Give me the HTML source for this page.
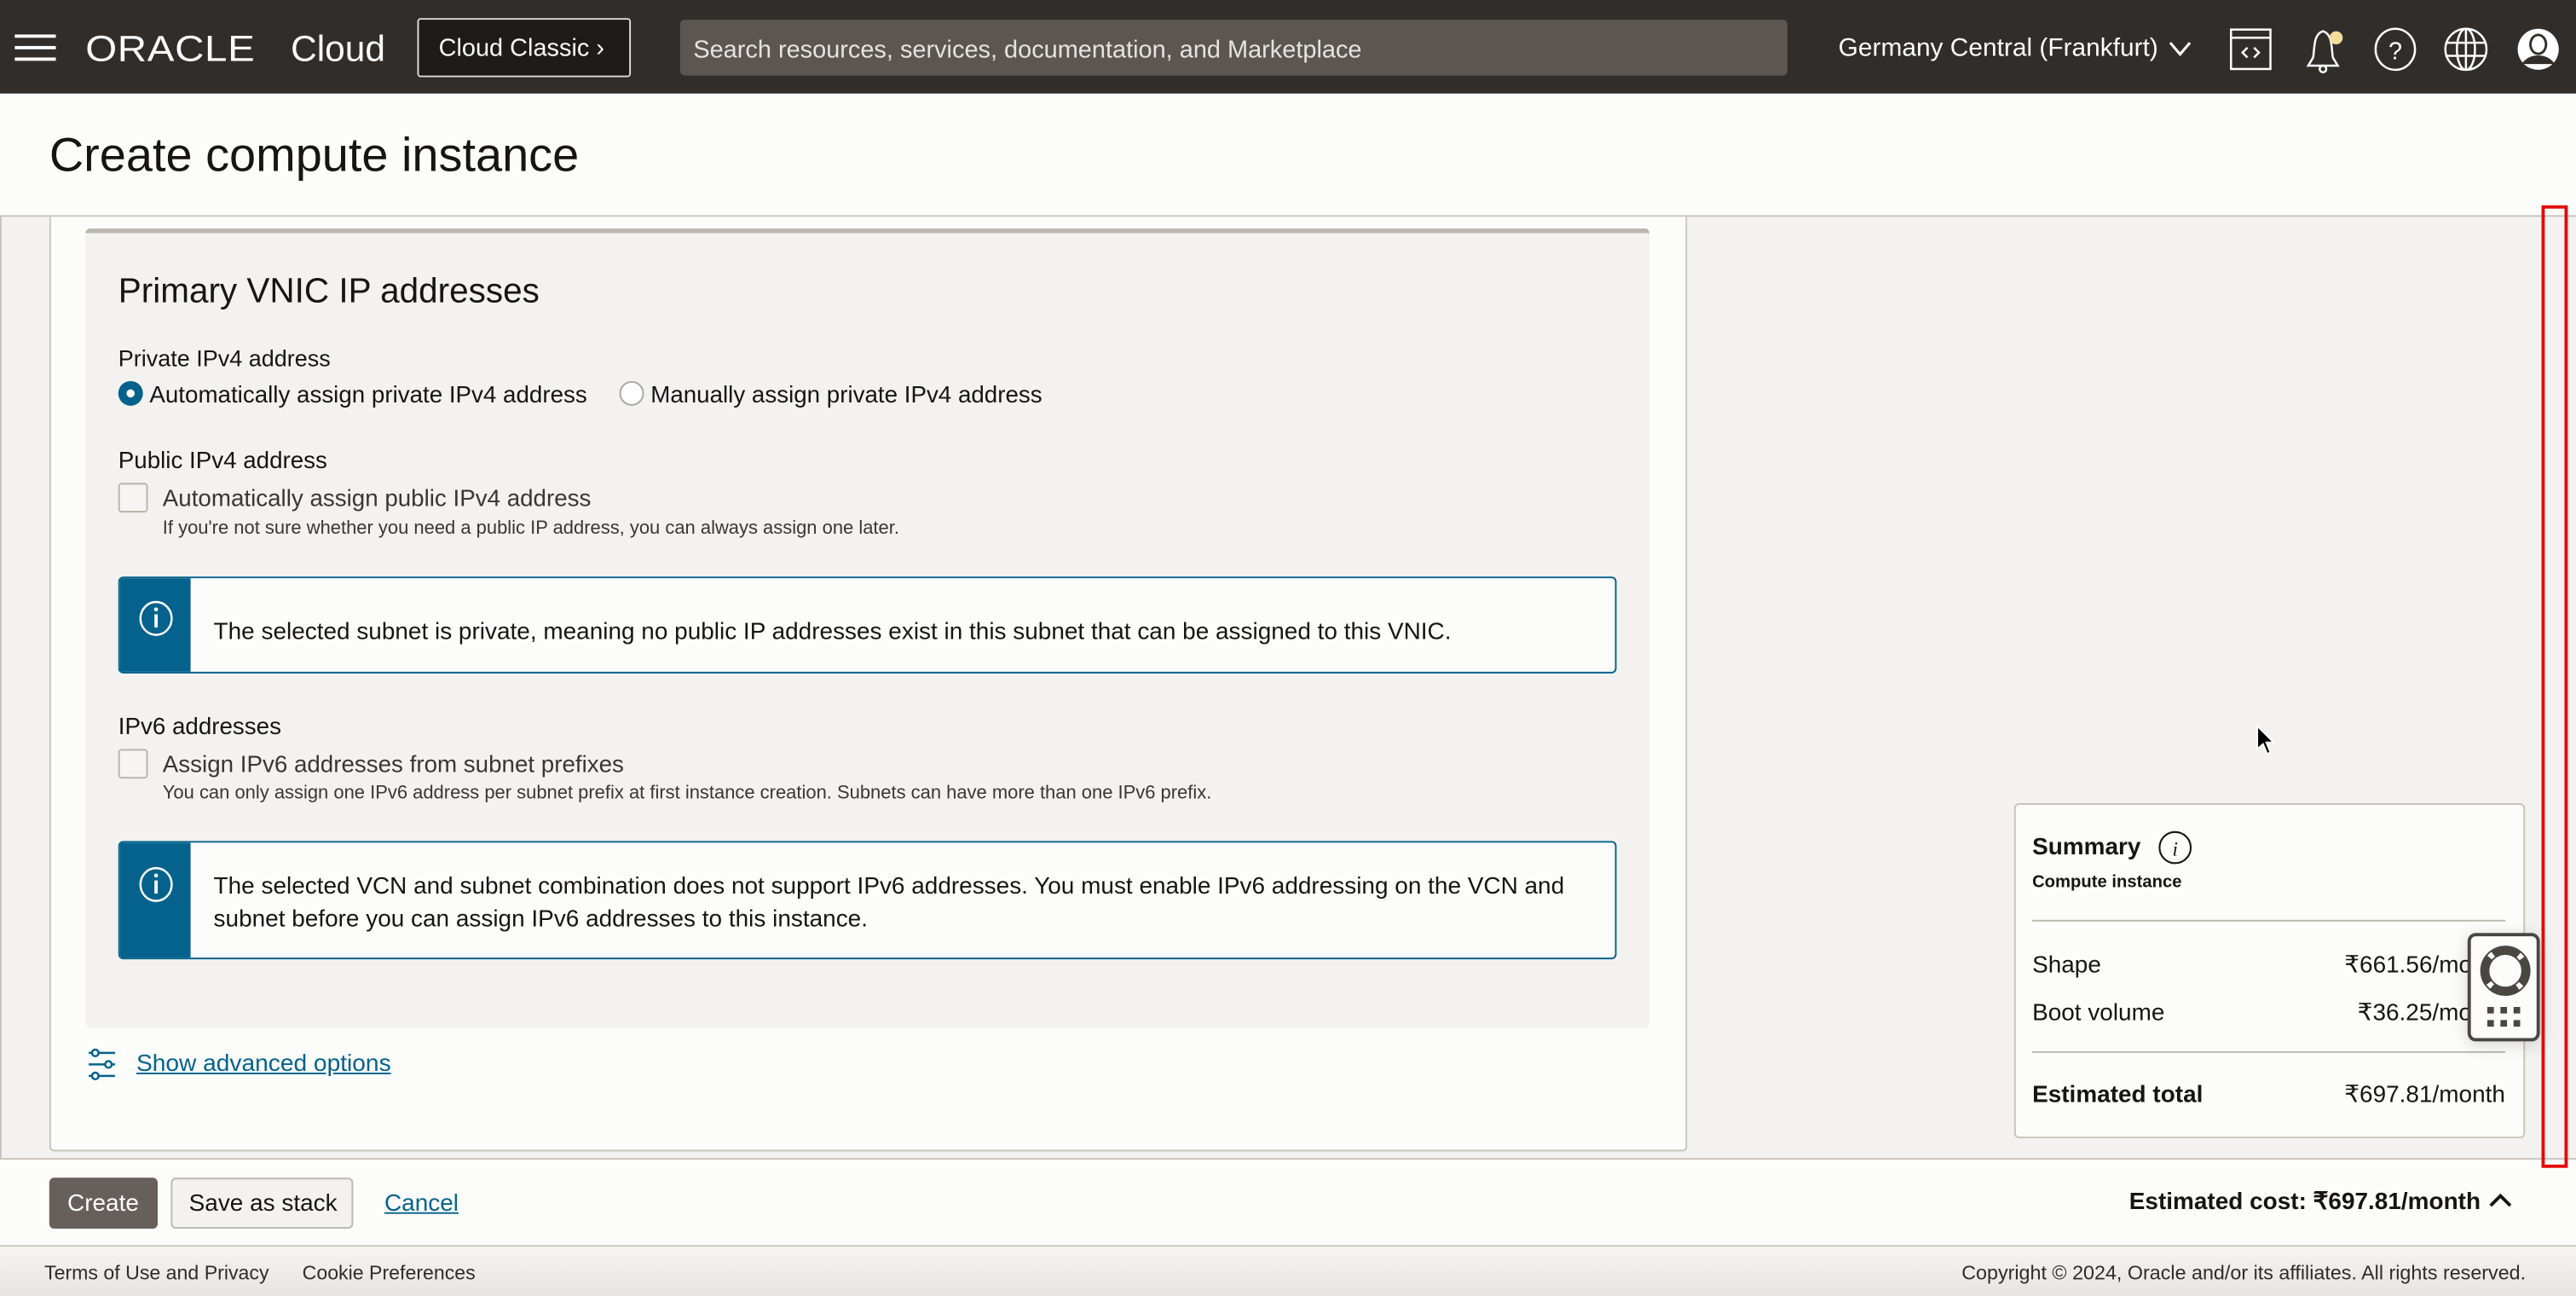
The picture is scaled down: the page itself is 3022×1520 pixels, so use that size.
<!DOCTYPE html>
<html><head><meta charset="utf-8">
<style>
html,body{margin:0;padding:0;width:3022px;height:1520px;overflow:hidden;background:#f3f2f0;}
#s{position:absolute;left:0;top:0;width:1568px;height:789px;transform-origin:0 0;transform:scale(1.92730,1.92649);font-family:"Liberation Sans",sans-serif;color:#161513;background:#f3f2f0;}
.a{position:absolute;}
.hdr{left:0;top:0;width:1568px;height:57px;background:#312d2a;}
.w{color:#fff;}
.t{white-space:nowrap;}
</style></head><body>
<div id="s">
<div class="a hdr"></div>
<div class="a" style="left:9px;top:21px;width:25px;height:2px;background:#fff"></div>
<div class="a" style="left:9px;top:28px;width:25px;height:2px;background:#fff"></div>
<div class="a" style="left:9px;top:35px;width:25px;height:2px;background:#fff"></div>
<div class="a t w" style="left:52px;top:17px;font-size:22px;font-weight:normal;letter-spacing:0.3px;transform:scaleX(1.12);transform-origin:0 0">ORACLE</div>
<div class="a t w" style="left:177px;top:17px;font-size:22px;">Cloud</div>
<div class="a" style="left:254px;top:11px;width:128px;height:34px;border:1px solid #ddd;border-radius:2px;background:#1e1b19"></div>
<div class="a t w" style="left:267px;top:21px;font-size:15px;">Cloud Classic &#x203A;</div>
<div class="a" style="left:414px;top:12px;width:674px;height:34px;background:#5b5652;border-radius:3px"></div>
<div class="a t" style="left:422px;top:22px;font-size:15px;color:#e6e3e0">Search resources, services, documentation, and Marketplace</div>
<div class="a t w" style="left:1119px;top:21px;font-size:15.5px;">Germany Central (Frankfurt)</div>
<svg class="a" style="left:1319px;top:23px" width="16" height="12"><path d="M2 3 L8 10 L14 3" stroke="#fff" stroke-width="1.6" fill="none"/></svg>
<svg class="a" style="left:1356px;top:16px" width="28" height="28" fill="none" stroke="#fff" stroke-width="1.3"><rect x="2" y="2" width="24" height="24"/><line x1="2" y1="7" x2="26" y2="7"/><path d="M12 13 L9 16 L12 19 M16 13 L19 16 L16 19"/></svg>
<svg class="a" style="left:1400px;top:15px" width="30" height="30" fill="none" stroke="#fff" stroke-width="1.3"><path d="M14 4 C8 6 9 14 8 20 L5 25 L23 25 L20 20 C19 14 20 6 14 4 Z"/><circle cx="14" cy="27" r="2"/><circle cx="22" cy="8" r="4" fill="#f5dc9a" stroke="none"/></svg>
<svg class="a" style="left:1444px;top:16px" width="28" height="28" fill="none" stroke="#fff" stroke-width="1.3"><ellipse cx="14" cy="14" rx="12" ry="12.5"/><text x="14" y="20" font-size="15" fill="#fff" stroke="none" text-anchor="middle" font-family="Liberation Sans">?</text></svg>
<svg class="a" style="left:1487px;top:16px" width="28" height="28" fill="none" stroke="#fff" stroke-width="1.3"><circle cx="14" cy="14" r="12.5"/><ellipse cx="14" cy="14" rx="5.5" ry="12.5"/><line x1="1.5" y1="10" x2="26.5" y2="10"/><line x1="1.5" y1="18" x2="26.5" y2="18"/><line x1="14" y1="1.5" x2="14" y2="26.5"/></svg>
<svg class="a" style="left:1531px;top:16px" width="28" height="28"><circle cx="14" cy="14" r="12.5" fill="#fff"/><ellipse cx="14" cy="11" rx="5.5" ry="6.5" fill="#312d2a"/><path d="M4 23 C8 16 20 16 24 23" fill="#312d2a"/><ellipse cx="14" cy="11" rx="4" ry="5" fill="#fff"/></svg>

<div class="a" style="left:0;top:57px;width:1568px;height:74px;background:#fcfcfb;border-bottom:1px solid #c8c3bd"></div>
<div class="a t" style="left:30px;top:79px;font-size:29px;">Create compute instance</div>

<div class="a" style="left:0;top:132px;width:1px;height:573px;background:#c8c3bd"></div>
<div class="a" style="left:30px;top:132px;width:995px;height:568px;background:#fcfcfb;border:1px solid #c8c3bd;border-top:none;border-radius:0 0 3px 3px"></div>
<div class="a" style="left:52px;top:139px;width:952px;height:487px;background:#f3f2f1;border-top:3px solid #bcb7b2;border-radius:3px 3px 4px 4px;box-sizing:border-box"></div>
<div class="a t" style="left:72px;top:166px;font-size:21px;">Primary VNIC IP addresses</div>
<div class="a t" style="left:72px;top:210px;font-size:14px;">Private IPv4 address</div>
<div class="a" style="left:72px;top:232px;width:15px;height:15px;border-radius:50%;background:#04628c"></div>
<div class="a" style="left:77px;top:237px;width:5px;height:5px;border-radius:50%;background:#fff"></div>
<div class="a t" style="left:91px;top:233px;font-size:14.4px;">Automatically assign private IPv4 address</div>
<div class="a" style="left:377px;top:232px;width:13px;height:13px;border-radius:50%;border:1px solid #aaa5a0;background:#fff"></div>
<div class="a t" style="left:396px;top:233px;font-size:14.4px;">Manually assign private IPv4 address</div>
<div class="a t" style="left:72px;top:273px;font-size:14.4px;">Public IPv4 address</div>
<div class="a" style="left:72px;top:294px;width:16px;height:16px;border:1px solid #b8b3ae;border-radius:2px;background:#f6f5f4"></div>
<div class="a t" style="left:99px;top:296px;font-size:14.4px;color:#3a3633">Automatically assign public IPv4 address</div>
<div class="a t" style="left:99px;top:316px;font-size:11.4px;color:#3a3633">If you're not sure whether you need a public IP address, you can always assign one later.</div>

<div class="a" style="left:72px;top:351px;width:910px;height:57px;border:1px solid #04628c;border-radius:3px;background:#fcfcfb;overflow:hidden"><div style="position:absolute;left:0;top:0;width:43px;height:100%;background:#04628c"></div></div>
<svg class="a" style="left:84px;top:365px" width="22" height="24" fill="none" stroke="#fff" stroke-width="1.3"><ellipse cx="11" cy="11.5" rx="9.5" ry="10"/><line x1="11" y1="9" x2="11" y2="17" stroke-width="2"/><circle cx="11" cy="6" r="1.2" fill="#fff" stroke="none"/></svg>
<div class="a t" style="left:130px;top:377px;font-size:14.5px;">The selected subnet is private, meaning no public IP addresses exist in this subnet that can be assigned to this VNIC.</div>

<div class="a t" style="left:72px;top:435px;font-size:14.4px;">IPv6 addresses</div>
<div class="a" style="left:72px;top:456px;width:16px;height:16px;border:1px solid #b8b3ae;border-radius:2px;background:#f6f5f4"></div>
<div class="a t" style="left:99px;top:458px;font-size:14.4px;color:#3a3633">Assign IPv6 addresses from subnet prefixes</div>
<div class="a t" style="left:99px;top:477px;font-size:11.4px;color:#3a3633">You can only assign one IPv6 address per subnet prefix at first instance creation. Subnets can have more than one IPv6 prefix.</div>

<div class="a" style="left:72px;top:512px;width:910px;height:70px;border:1px solid #04628c;border-radius:3px;background:#fcfcfb;overflow:hidden"><div style="position:absolute;left:0;top:0;width:43px;height:100%;background:#04628c"></div></div>
<svg class="a" style="left:84px;top:527px" width="22" height="24" fill="none" stroke="#fff" stroke-width="1.3"><ellipse cx="11" cy="11.5" rx="9.5" ry="10"/><line x1="11" y1="9" x2="11" y2="17" stroke-width="2"/><circle cx="11" cy="6" r="1.2" fill="#fff" stroke="none"/></svg>
<div class="a" style="left:130px;top:530px;width:845px;font-size:14.5px;line-height:20px;">The selected VCN and subnet combination does not support IPv6 addresses. You must enable IPv6 addressing on the VCN and subnet before you can assign IPv6 addresses to this instance.</div>

<svg class="a" style="left:52px;top:638px" width="22" height="20" fill="none" stroke="#04628c" stroke-width="1.3"><line x1="2" y1="3" x2="4" y2="3"/><circle cx="6" cy="3" r="2"/><line x1="8" y1="3" x2="18" y2="3"/><line x1="2" y1="10" x2="12" y2="10"/><circle cx="14" cy="10" r="2"/><line x1="16" y1="10" x2="18" y2="10"/><line x1="2" y1="17" x2="4" y2="17"/><circle cx="6" cy="17" r="2"/><line x1="8" y1="17" x2="18" y2="17"/></svg>
<div class="a t" style="left:83px;top:640px;font-size:14.6px;color:#04628c;text-decoration:underline">Show advanced options</div>

<div class="a" style="left:1226px;top:489px;width:309px;height:202px;background:#fcfcfb;border:1px solid #c8c3bd;border-radius:3px"></div>
<div class="a t" style="left:1237px;top:508px;font-size:14.5px;font-weight:bold">Summary</div>
<svg class="a" style="left:1313px;top:505px" width="22" height="22" fill="none" stroke="#161513" stroke-width="1.1"><circle cx="11" cy="11" r="9.5"/><text x="11" y="16" font-size="12" font-style="italic" fill="#161513" stroke="none" text-anchor="middle" font-family="Liberation Serif">i</text></svg>
<div class="a t" style="left:1237px;top:531px;font-size:10.5px;font-weight:bold">Compute instance</div>
<div class="a" style="left:1237px;top:560px;width:288px;height:1px;background:#bcb7b2"></div>
<div class="a t" style="left:1237px;top:580px;font-size:14.5px;">Shape</div>
<div class="a t" style="left:1427px;top:580px;font-size:14.5px;">₹661.56/mo</div>
<div class="a t" style="left:1237px;top:609px;font-size:14.5px;">Boot volume</div>
<div class="a t" style="left:1435px;top:609px;font-size:14.5px;">₹36.25/mo</div>
<div class="a" style="left:1237px;top:640px;width:288px;height:1px;background:#bcb7b2"></div>
<div class="a t" style="left:1237px;top:659px;font-size:14.5px;font-weight:bold">Estimated total</div>
<div class="a t" style="left:1427px;top:659px;font-size:14.5px;">₹697.81/month</div>
<div class="a" style="left:1502px;top:568px;width:44px;height:66px;background:#fcfcfb;border:2px solid #4a4643;border-radius:5px;box-sizing:border-box;box-shadow:0 2px 10px rgba(0,0,0,0.15)"></div>
<svg class="a" style="left:1508px;top:574px" width="34" height="34" fill="none"><circle cx="17" cy="17" r="12.5" stroke="#4a4643" stroke-width="4"/><circle cx="17" cy="17" r="12.5" stroke="#fcfcfb" stroke-width="4.2" stroke-dasharray="3 16.6" transform="rotate(40 17 17)"/><circle cx="17" cy="17" r="14.8" stroke="#4a4643" stroke-width="1"/><circle cx="17" cy="17" r="10.2" stroke="#4a4643" stroke-width="1"/></svg>
<svg class="a" style="left:1514px;top:613px" width="26" height="14" fill="#4a4643"><rect x="0" y="0" width="4" height="4"/><rect x="8" y="0" width="4" height="4"/><rect x="16" y="0" width="4" height="4"/><rect x="0" y="8" width="4" height="4"/><rect x="8" y="8" width="4" height="4"/><rect x="16" y="8" width="4" height="4"/></svg>

<svg class="a" style="left:1372px;top:441px" width="14" height="20"><path d="M2 1 L2 15 L5.5 12 L8 18 L10 17 L7.5 11 L12 11 Z" fill="#000" stroke="#fff" stroke-width="1"/></svg>

<div class="a" style="left:0;top:705px;width:1568px;height:54px;background:#fcfcfb;border-top:1px solid #c8c3bd;border-bottom:1px solid #c8c3bd;box-sizing:border-box"></div>
<div class="a" style="left:30px;top:717px;width:66px;height:31px;background:#665f5b;border-radius:3px"></div>
<div class="a t w" style="left:41px;top:725px;font-size:14.5px;">Create</div>
<div class="a" style="left:104px;top:717px;width:111px;height:31px;background:#f3f2f1;border:1px solid #bcb7b2;border-radius:3px;box-sizing:border-box"></div>
<div class="a t" style="left:115px;top:725px;font-size:14.5px;">Save as stack</div>
<div class="a t" style="left:234px;top:725px;font-size:14.5px;color:#04628c;text-decoration:underline">Cancel</div>
<div class="a t" style="left:1296px;top:724px;font-size:14.5px;font-weight:bold">Estimated cost: ₹697.81/month</div>
<svg class="a" style="left:1514px;top:725px" width="16" height="12"><path d="M2 9 L8 3 L14 9" stroke="#161513" stroke-width="2" fill="none"/></svg>

<div class="a" style="left:0;top:759px;width:1568px;height:30px;background:linear-gradient(#f6f5f4,#e6e4e2)"></div>
<div class="a t" style="left:27px;top:768px;font-size:12px;color:#2f2c2a">Terms of Use and Privacy</div>
<div class="a t" style="left:184px;top:768px;font-size:12px;color:#2f2c2a">Cookie Preferences</div>
<div class="a t" style="left:1194px;top:768px;font-size:12.1px;color:#2f2c2a">Copyright © 2024, Oracle and/or its affiliates. All rights reserved.</div>

<div class="a" style="left:1547px;top:125px;width:16px;height:586px;border:2px solid #e30a0a;box-sizing:border-box"></div>
</div>
</body></html>
